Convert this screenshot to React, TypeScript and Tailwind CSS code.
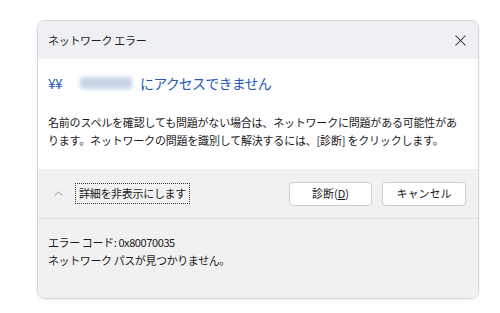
import { X, ChevronUp } from 'lucide-react';

const font = { fontFamily: '"Noto Sans CJK JP", "Noto Sans", sans-serif' };

const NetworkErrorDialog = () => {
  return (
    <div className="w-[500px] h-[313px] bg-white pt-[20px] pl-[37px]" style={font}>
      <div className="w-[442px] h-[279px] rounded-[8px] border border-[#d6d6d6] overflow-hidden flex flex-col shadow-[0_1px_3px_rgba(0,0,0,0.08)]">
        {/* Title bar */}
        <div className="h-[38px] bg-[#eef0f3] flex items-center justify-between pl-[10px] pr-[8px]">
          <span className="text-[11px] text-[#1f1f1f] tracking-[-0.3px]">ネットワーク エラー</span>
          <X size={19} strokeWidth={1.3} className="text-[#2a2a2a]" />
        </div>

        {/* Main message */}
        <div className="bg-white h-[110px] pl-[10px] pt-[13px]">
          <div className="flex items-center h-[22px] text-[14px] text-[#2559b5] tracking-[-0.8px]">
            <span>¥¥</span>
            <span className="ml-[18px] w-[52px] h-[12px] bg-[#c9d3e6] blur-[2px] rounded-sm" />
            <span className="ml-[8px]">にアクセスできません</span>
          </div>
          <p className="mt-[19px] text-[11px] leading-[18px] text-[#1a1a1a] tracking-[-0.2px]">
            名前のスペルを確認しても問題がない場合は、ネットワークに問題がある可能性があ
            <br />
            ります。ネットワークの問題を識別して解決するには、[診断] をクリックします。
          </p>
        </div>

        {/* Actions */}
        <div className="bg-[#f1f1f1] h-[50px] flex items-center pl-[14px] pr-[12px] border-b border-[#e0e0e0]">
          <ChevronUp size={13} strokeWidth={1.5} className="text-[#777]" />
          <span className="ml-[10px] px-[3px] py-[1px] border border-dotted border-[#333] text-[11px] text-[#1a1a1a] tracking-[-0.3px]">
            詳細を非表示にします
          </span>
          <div className="ml-auto flex gap-[10px]">
            <button className="w-[83px] h-[24px] bg-white border border-[#cfcfcf] rounded-[4px] text-[11px] text-[#1a1a1a]">
              診断(<span className="underline">D</span>)
            </button>
            <button className="w-[84px] h-[24px] bg-white border border-[#cfcfcf] rounded-[4px] text-[11px] text-[#1a1a1a]">
              キャンセル
            </button>
          </div>
        </div>

        {/* Details */}
        <div className="bg-[#f1f1f1] flex-1 pl-[10px] pt-[14px] text-[11px] leading-[18px] text-[#1a1a1a] tracking-[-0.4px]">
          <div>エラー コード: 0x80070035</div>
          <div>ネットワーク パスが見つかりません。</div>
        </div>
      </div>
    </div>
  );
};

export default function App() {
  return <NetworkErrorDialog />;
}
